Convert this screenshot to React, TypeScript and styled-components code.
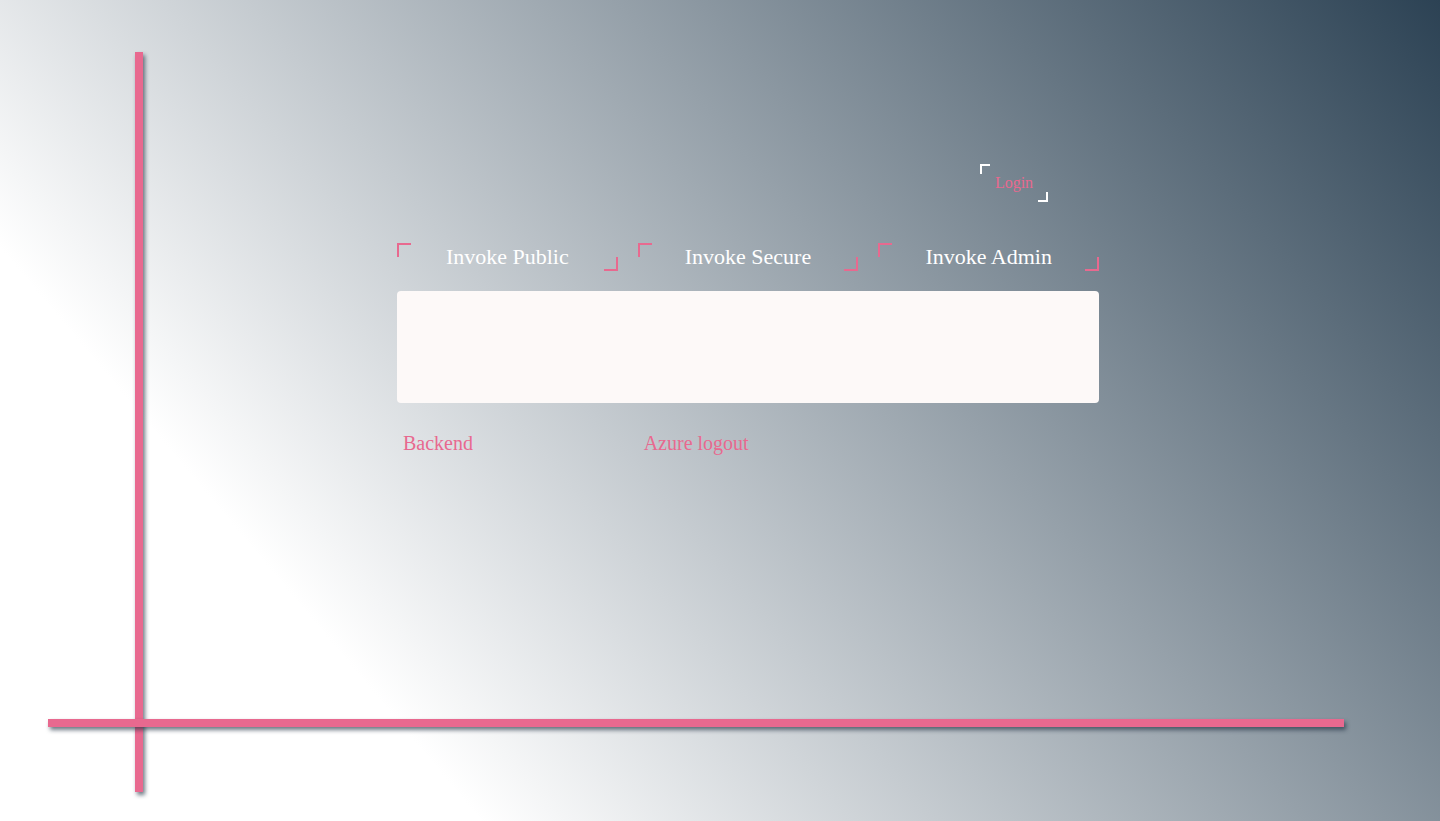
import React from "react";
import styled, { createGlobalStyle, css } from "styled-components";

const PINK = "#e8698f";

const GlobalStyle = createGlobalStyle`
  html, body {
    margin: 0;
    padding: 0;
    height: 100%;
  }
  body {
    font-family: "Liberation Serif", "Times New Roman", serif;
  }
`;

const Page = styled.div`
  position: relative;
  height: 100vh;
  overflow: hidden;
  box-sizing: border-box;
  padding: 164px 0 0 397px;
  background: linear-gradient(50deg, #ffffff 22.6%, #2c4254 100%);
`;

// decorative axis lines crossing the page
const VLine = styled.div`
  position: absolute;
  left: 135px;
  top: 52px;
  width: 8px;
  height: 740px;
  background: ${PINK};
  box-shadow: 2px 3px 4px rgba(30, 48, 64, 0.65);
`;

const HLine = styled.div`
  position: absolute;
  left: 48px;
  top: 719px;
  width: 1296px;
  height: 8px;
  background: ${PINK};
  box-shadow: 2px 3px 4px rgba(30, 48, 64, 0.65);
`;

const Main = styled.main`
  position: relative;
  width: 702px;
  display: flex;
  flex-direction: column;
`;

const Header = styled.div`
  display: flex;
  justify-content: flex-end;
  padding-right: 51px;
`;

const bracket = (color: string, size: number) => css`
  &::before,
  &::after {
    content: "";
    position: absolute;
    width: ${size}px;
    height: ${size}px;
    box-sizing: border-box;
  }
  &::before {
    top: 0;
    left: 0;
    border-top: 2px solid ${color};
    border-left: 2px solid ${color};
  }
  &::after {
    right: 0;
    bottom: 0;
    border-right: 2px solid ${color};
    border-bottom: 2px solid ${color};
  }
`;

const LoginButton = styled.button`
  position: relative;
  width: 68px;
  height: 38px;
  padding: 0;
  border: none;
  background: transparent;
  color: ${PINK};
  font-family: "Liberation Serif", "Times New Roman", serif;
  font-size: 16px;
  cursor: pointer;
  ${bracket("#ffffff", 10)}
`;

const ButtonRow = styled.div`
  display: grid;
  grid-template-columns: repeat(3, 1fr);
  column-gap: 20px;
  margin-top: 41px;
`;

const InvokeButton = styled.button`
  position: relative;
  height: 28px;
  padding: 0;
  border: none;
  background: transparent;
  color: #ffffff;
  font-family: "Liberation Serif", "Times New Roman", serif;
  font-size: 22px;
  line-height: 28px;
  cursor: pointer;
  ${bracket(PINK, 14)}
`;

const Output = styled.div`
  margin-top: 20px;
  height: 112px;
  background: #fdf9f8;
  border-radius: 4px;
`;

const LinkRow = styled.div`
  display: grid;
  grid-template-columns: repeat(3, 1fr);
  column-gap: 20px;
  margin-top: 28px;
`;

const Link = styled.a`
  padding-left: 6px;
  color: ${PINK};
  font-size: 20px;
  line-height: 24px;
  text-decoration: none;
`;

export default function App() {
  return (
    <>
      <GlobalStyle />
      <Page>
        <VLine />
        <HLine />
        <Main>
          <Header>
            <LoginButton>Login</LoginButton>
          </Header>
          <ButtonRow>
            <InvokeButton>Invoke Public</InvokeButton>
            <InvokeButton>Invoke Secure</InvokeButton>
            <InvokeButton>Invoke Admin</InvokeButton>
          </ButtonRow>
          <Output />
          <LinkRow>
            <Link href="#">Backend</Link>
            <Link href="#">Azure logout</Link>
          </LinkRow>
        </Main>
      </Page>
    </>
  );
}
